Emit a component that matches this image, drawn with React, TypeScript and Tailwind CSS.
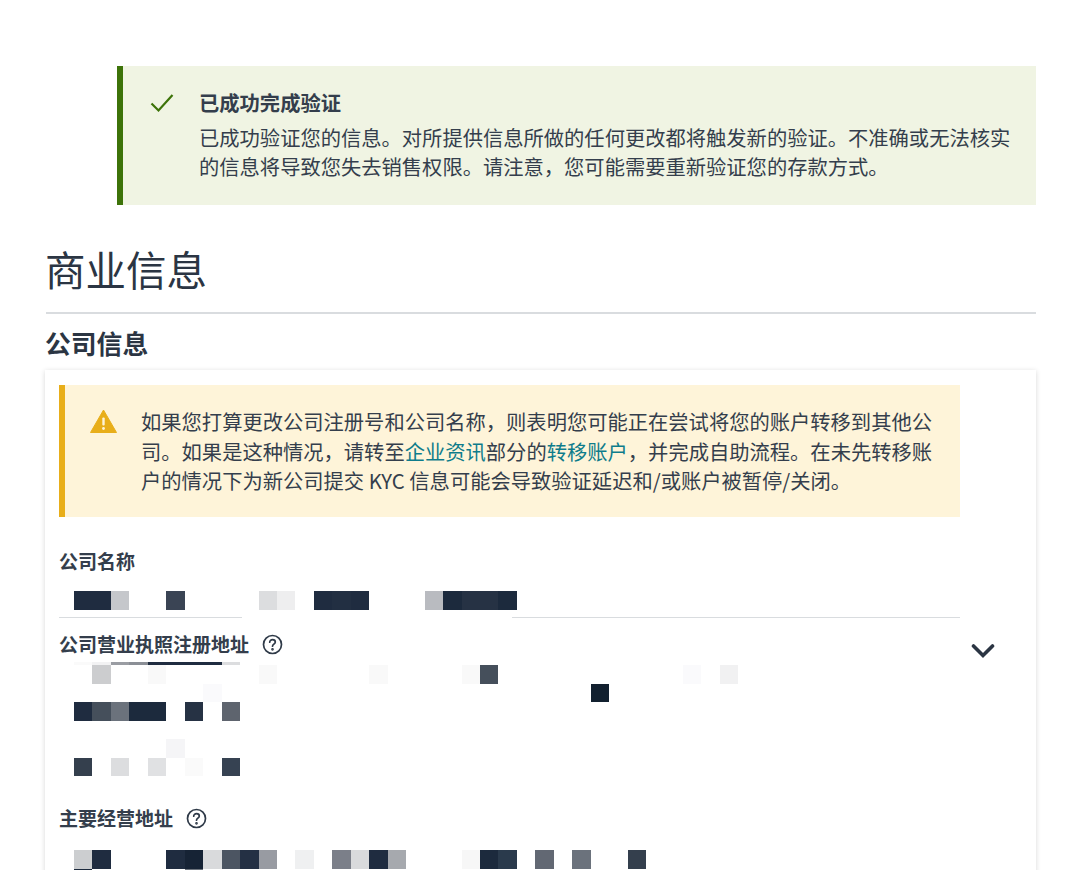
import React from "react";

type Cell = [number, string];

const C = "\uFF0C";

function MosaicRow({ cells, thin }: { cells: Cell[]; thin?: boolean }) {
  const max = cells.reduce((m, c) => Math.max(m, c[0]), -1);
  const map = new Map(cells);
  return (
    <div className={thin ? "flex ml-[30px] h-[3px]" : "flex ml-[30px] h-[18.5px]"}>
      {Array.from({ length: max + 1 }, (_, i) => (
        <div key={i} className="w-[18.46px] shrink-0 h-full" style={{ backgroundColor: map.get(i) ?? "transparent" }} />
      ))}
    </div>
  );
}

function Help() {
  return (
    <svg width="21" height="21" viewBox="0 0 21 21" fill="none" stroke="#2f3a48" strokeWidth="1.7" strokeLinecap="round" strokeLinejoin="round">
      <circle cx="10.5" cy="10.5" r="9" />
      <path d="M7.7 8.2c0-1.6 1.3-2.6 2.8-2.6s2.8 1 2.8 2.4c0 2-2.8 2.2-2.8 4.2" />
      <circle cx="10.5" cy="15.3" r="0.5" fill="#2f3a48" />
    </svg>
  );
}

function Label({ children }: { children: React.ReactNode }) {
  return <div className="text-[19px] leading-[30px] font-semibold text-[#343e4c]">{children}</div>;
}

export default function App() {
  return (
    <div lang="zh-CN" className="h-[870px] overflow-hidden bg-white text-[#343e4c] font-['Noto_Sans_CJK_SC','Noto_Sans',sans-serif]">
      <div className="pt-[66px] pl-[46px] pr-[44px]">
        <div className="ml-[71px] h-[139px] flex border-l-[6px] border-[#3d7309] bg-[#f0f4e3] pt-[21px]">
          <svg className="ml-[27px] mt-[6px] shrink-0" width="24" height="20" viewBox="0 0 24 20" fill="none" stroke="#3d7309" strokeWidth="2.2">
            <path d="M1.5 10.5 L8.5 17.5 L22.5 2" />
          </svg>
          <div className="ml-[25px]">
            <div className="text-[20.3px] leading-[30px] font-semibold">已成功完成验证</div>
            <div className="mt-[6px] w-[815px] text-[20.3px] leading-[29px]">
              {`已成功验证您的信息。对所提供信息所做的任何更改都将触发新的验证。不准确或无法核实的信息将导致您失去销售权限。请注意${C}您可能需要重新验证您的存款方式。`}
            </div>
          </div>
        </div>

        <h1 className="mt-[34px] pb-[1px] -ml-px text-[40.5px] leading-[60px] font-normal text-[#2b3543]">商业信息</h1>
        <div className="mt-[12px] h-[2px] bg-[#d9dcdf]" />
        <h2 className="mt-[7px] pb-[1px] -ml-px text-[25.8px] leading-[44px] font-semibold text-[#2b3543]">公司信息</h2>

        <div className="mt-[4px] -ml-px h-[600px] bg-white pt-[15px] pl-[14px] pr-[40px] shadow-[0_1px_5px_rgba(0,0,0,0.16)]">
          <div className="w-[901px] h-[132px] flex border-l-[6px] border-[#e8ae1a] bg-[#fef4d9] pt-[22px]">
            <svg className="ml-[25px] mt-[2px] shrink-0" width="27" height="24" viewBox="0 0 27 24">
              <path d="M13.5 1 L26.5 23.5 L0.5 23.5 Z" fill="#e8ae1a" stroke="#e8ae1a" strokeLinejoin="round" />
              <rect x="12.3" y="8.5" width="2.4" height="8" rx="1" fill="#fef4d9" />
              <circle cx="13.5" cy="19.5" r="1.4" fill="#fef4d9" />
            </svg>
            <div className="ml-[24px] w-[800px] text-[20.3px] leading-[29.5px]">
              {`如果您打算更改公司注册号和公司名称${C}则表明您可能正在尝试将您的账户转移到其他公司。如果是这种情况${C}请转至`}
              <span className="text-[#0e7c8b]">企业资讯</span>
              部分的
              <span className="text-[#0e7c8b]">转移账户</span>
              {`${C}并完成自助流程。在未先转移账户的情况下为新公司提交 KYC 信息可能会导致验证延迟和/或账户被暂停/关闭。`}
            </div>
          </div>

          <div className="mt-[29px]"><Label>公司名称</Label></div>
          <div className="mt-[15px] -ml-[15px]">
            <MosaicRow cells={[[0, "#1f2c40"], [1, "#1f2c40"], [2, "#c5c7cb"], [5, "#3a4454"], [10, "#dcdddf"], [11, "#eeeeef"], [13, "#1f2c40"], [14, "#222f42"], [15, "#1f2c40"], [19, "#b9bbc0"], [20, "#1c2a3d"], [21, "#263244"], [22, "#263244"], [23, "#1c2a3d"]]} />
          </div>
          <div className="mt-[7px] w-[901px] flex">
            <div className="w-[183px] h-[1.5px] bg-[#d9dcdf]" />
            <div className="ml-[270px] flex-1 h-[1.5px] bg-[#d9dcdf]" />
          </div>

          <div className="mt-[11px] flex justify-between w-[936px]">
            <div className="flex items-center gap-[13px] h-[30px]">
              <Label>公司营业执照注册地址</Label>
              <Help />
            </div>
            <svg className="mt-[14px]" width="24" height="16" viewBox="0 0 24 16" fill="none" stroke="#2b3543" strokeWidth="3.6" strokeLinecap="round" strokeLinejoin="miter">
              <path d="M2.5 3 L12 12.5 L21.5 3" />
            </svg>
          </div>

          <div className="mt-[3px] -ml-[15px]">
            <MosaicRow thin cells={[[0, "#fafafa"], [1, "#f2f2f3"], [2, "#9a9da3"], [3, "#8b8f96"], [4, "#1f2c40"], [5, "#1f2c40"], [6, "#1f2c40"], [7, "#1f2c40"], [8, "#dcdddf"]]} />
            <MosaicRow cells={[[1, "#cccdcf"], [4, "#f9f9f9"], [10, "#f9f9f9"], [16, "#f9f9f9"], [21, "#f9f9f9"], [22, "#454f5b"], [33, "#fafafc"], [35, "#f1f1f2"]]} />
            <MosaicRow cells={[[7, "#fafafc"], [28, "#12202f"]]} />
            <MosaicRow cells={[[0, "#1f2c40"], [1, "#454f5b"], [2, "#6b727c"], [3, "#1c2a3d"], [4, "#1c2a3d"], [6, "#263244"], [8, "#5e646e"]]} />
            <MosaicRow cells={[[0, "transparent"]]} />
            <MosaicRow cells={[[5, "#f5f5f7"]]} />
            <MosaicRow cells={[[0, "#343f4d"], [2, "#dcdddf"], [4, "#e0e1e3"], [6, "#fafafa"], [8, "#364252"]]} />
          </div>

          <div className="mt-[27px] flex items-center gap-[13px] h-[30px]">
            <Label>主要经营地址</Label>
            <Help />
          </div>

          <div className="mt-[17px] -ml-[15px]">
            <MosaicRow cells={[[0, "#ccced0"], [1, "#1f2c40"], [5, "#1f2c40"], [6, "#162335"], [7, "#d9dadc"], [8, "#4c5562"], [9, "#243044"], [10, "#989ba2"], [12, "#eff0f1"], [14, "#7b7f89"], [15, "#d9dadc"], [16, "#1f2c40"], [17, "#a6a9ae"], [21, "#f7f7f7"], [22, "#1c2a3d"], [23, "#2a3a4c"], [25, "#626873"], [27, "#6b727c"], [30, "#343f4d"]]} />
            <MosaicRow cells={[[0, "#1c2a3d"], [6, "#6b727c"]]} />
          </div>
        </div>
      </div>
    </div>
  );
}
